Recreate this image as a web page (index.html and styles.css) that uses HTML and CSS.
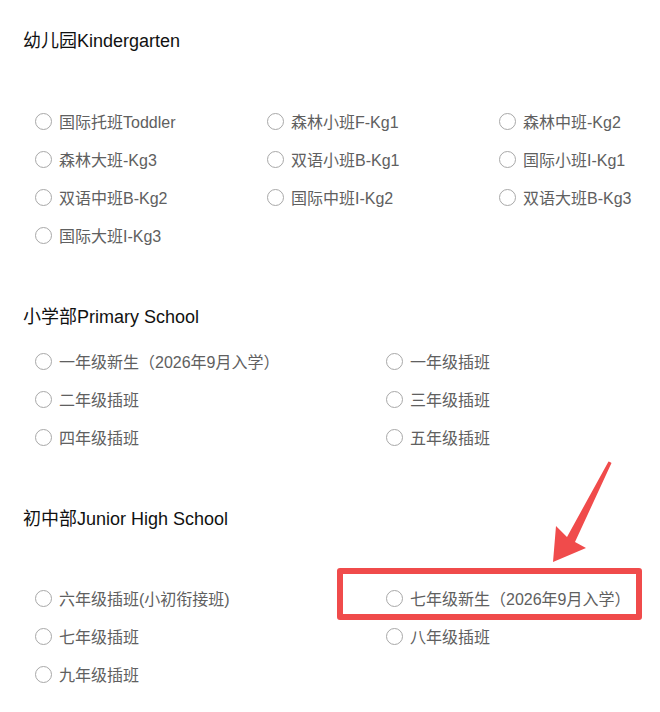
FILE: index.html
```html
<!DOCTYPE html>
<html lang="zh-CN">
<head>
<meta charset="utf-8">
<link rel="stylesheet" href="styles.css">
</head>
<body>
<div class="page">
  <section class="group group-kg">
    <h2 class="group-title">幼儿园Kindergarten</h2>
    <div class="options cols-3">
      <label class="option"><span class="radio"></span><span class="label">国际托班Toddler</span></label>
      <label class="option"><span class="radio"></span><span class="label">森林小班F-Kg1</span></label>
      <label class="option"><span class="radio"></span><span class="label">森林中班-Kg2</span></label>
      <label class="option"><span class="radio"></span><span class="label">森林大班-Kg3</span></label>
      <label class="option"><span class="radio"></span><span class="label">双语小班B-Kg1</span></label>
      <label class="option"><span class="radio"></span><span class="label">国际小班I-Kg1</span></label>
      <label class="option"><span class="radio"></span><span class="label">双语中班B-Kg2</span></label>
      <label class="option"><span class="radio"></span><span class="label">国际中班I-Kg2</span></label>
      <label class="option"><span class="radio"></span><span class="label">双语大班B-Kg3</span></label>
      <label class="option"><span class="radio"></span><span class="label">国际大班I-Kg3</span></label>
    </div>
  </section>

  <section class="group group-primary">
    <h2 class="group-title">小学部Primary School</h2>
    <div class="options cols-2">
      <label class="option"><span class="radio"></span><span class="label">一年级新生（2026年9月入学）</span></label>
      <label class="option"><span class="radio"></span><span class="label">一年级插班</span></label>
      <label class="option"><span class="radio"></span><span class="label">二年级插班</span></label>
      <label class="option"><span class="radio"></span><span class="label">三年级插班</span></label>
      <label class="option"><span class="radio"></span><span class="label">四年级插班</span></label>
      <label class="option"><span class="radio"></span><span class="label">五年级插班</span></label>
    </div>
  </section>

  <section class="group group-junior">
    <h2 class="group-title">初中部Junior High School</h2>
    <div class="options cols-2">
      <label class="option"><span class="radio"></span><span class="label">六年级插班(小初衔接班)</span></label>
      <label class="option"><span class="radio"></span><span class="label">七年级新生（2026年9月入学）</span></label>
      <label class="option"><span class="radio"></span><span class="label">七年级插班</span></label>
      <label class="option"><span class="radio"></span><span class="label">八年级插班</span></label>
      <label class="option"><span class="radio"></span><span class="label">九年级插班</span></label>
    </div>
  </section>

  <div class="highlight-box"></div>
  <svg class="arrow" width="70" height="110" viewBox="0 0 70 110">
    <polygon points="60,0 61.5,1 25,80 36,86 3,100 6,64 17,75 58.5,-0.5" fill="#f04b4b"/>
  </svg>
</div>
</body>
</html>
```

FILE: styles.css
```css
html, body {
  margin: 0;
  padding: 0;
  background: #ffffff;
}

body {
  font-family: "Liberation Sans", "Noto Sans CJK SC", sans-serif;
}

.page {
  position: relative;
  width: 660px;
  height: 712px;
  padding: 29px 0 0 23px;
  box-sizing: border-box;
  overflow: hidden;
}

.group-title {
  margin: 0;
  font-size: 18px;
  font-weight: normal;
  line-height: 24px;
  color: #111111;
}

.options {
  display: grid;
  margin-left: 12px;
}

.cols-3 {
  grid-template-columns: 232px 232px auto;
}

.cols-2 {
  grid-template-columns: 351px auto;
}

.option {
  display: flex;
  align-items: center;
  height: 38px;
  font-size: 16px;
  color: #606060;
  white-space: nowrap;
}

.radio {
  flex: none;
  width: 17px;
  height: 17px;
  box-sizing: border-box;
  border: 1px solid #a8a8a8;
  border-radius: 50%;
  background: #fff;
  margin-right: 7px;
}

.group-kg .options {
  margin-top: 49px;
}

.group-primary {
  margin-top: 51px;
}

.group-primary .options {
  margin-top: 13px;
}

.group-junior {
  margin-top: 51px;
}

.group-junior .options {
  margin-top: 48px;
}

.highlight-box {
  position: absolute;
  left: 337px;
  top: 568px;
  width: 305px;
  height: 52px;
  box-sizing: border-box;
  border: 6px solid #f04b4b;
  border-radius: 3px;
}

.arrow {
  position: absolute;
  left: 550px;
  top: 462px;
  overflow: visible;
}
```
